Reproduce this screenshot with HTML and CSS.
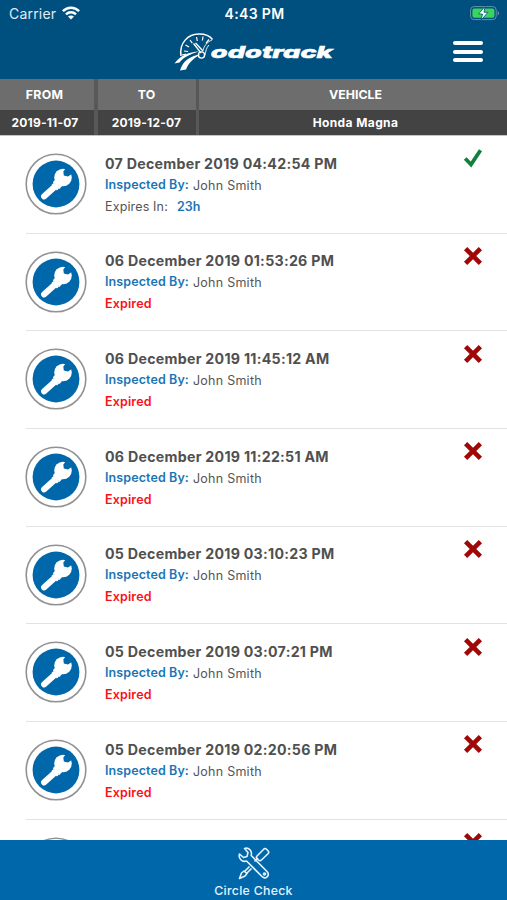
FILE: index.html
```
<!DOCTYPE html>
<html lang="en">
<head>
<meta charset="utf-8">
<title>odotrack</title>
<link rel="stylesheet" href="styles.css">
</head>
<body>
<svg class="defs" width="0" height="0">
  <symbol id="wrench" viewBox="0 0 62 62">
    <circle cx="31" cy="31" r="29.8" fill="#fff" stroke="#929292" stroke-width="1.6"/>
    <circle cx="31" cy="31" r="23.4" fill="#0067aa"/>
    <path d="M19.200 43.300 29.500 34" stroke="#fff" stroke-width="6.2" stroke-linecap="round"/>
    <path d="M27.500 31 33 36.500" stroke="#fff" stroke-width="3"/>
    <circle cx="38" cy="24.500" r="8.800" fill="#fff"/>
    <path d="M27.800 29.200 34.500 36 38 32 31 26Z" fill="#fff"/>
    <path d="M44 11.500 38.300 18.500 38.800 22.600 43 23.600 50.500 18.500Z" fill="#0067aa"/>
  </symbol>
  <symbol id="cross" viewBox="0 0 20 20"><path d="M2.600 2.600 17.400 17.400M17.400 2.600 2.600 17.400" stroke="#a00808" stroke-width="4.6"/></symbol>
  <symbol id="check" viewBox="0 0 20 20"><path d="M2.2 10.5 8 16.5 17.5 2.2" fill="none" stroke="#137f3c" stroke-width="3.8"/></symbol>
</svg>
<div class="app">
  <header>
    <div class="status">
      <div class="carrier"><span>Carrier</span>
        <svg width="18" height="14" viewBox="0 0 18 14" fill="none" stroke="#fff" stroke-width="2.5"><path d="M.9 5.1C5.5.5 12.5.5 17.1 5.1M4 8.3C6.8 5.5 11.2 5.5 14 8.3"/><path d="M9 13.6 6 10.5C7.6 9 10.4 9 12 10.5Z" fill="#fff" stroke="none"/></svg>
      </div>
      <div class="clock">4:43 PM</div>
      <svg class="battery" width="30" height="15" viewBox="0 0 30 15"><rect x=".6" y=".6" width="25.6" height="13" rx="3.5" fill="none" stroke="#6591b0"/><rect x="2.4" y="2.4" width="22" height="9.4" rx="2" fill="#38d65b"/><path d="M27.6 5v4.5c2-.8 2-3.700 0-4.500Z" fill="#6591b0"/><path d="M15 .5 8.500 8h4l-1.300 6L18 6.300h-4Z" fill="#fff" stroke="#00507f" stroke-width=".8"/></svg>
    </div>
    <div class="brand">
      <svg width="162" height="42" viewBox="0 0 162 42" fill="none" stroke="#fff">
        <g transform="translate(-1 0)">
        <path d="M9 26C7 13 16 4 27 4 33 4 38 6 40.500 9.500" stroke-width="1.500"/>
        <path d="M12 21l4 .5M13.500 15l3.500 2M18 10l2.300 3.200M24.500 7l.8 4M31 6.500l-.6 4M37 9.500l-3 3.600M10 25l4-1" stroke-width="1.200"/>
        <path d="M21.500 13.500 29 23M23.500 13 31 21" stroke-width="1.300"/>
        <circle cx="29.500" cy="25" r="3.100" stroke-width="1.400"/>
        <path d="M2.500 33.500C9 25 17 22 27 21.500 18 24 12 27 7.500 32.500ZM8 40.500C11 31 17 26.500 28 24.500 21 29 16.500 33 14 39.500Z" fill="#fff" stroke="none"/>
        <path d="M31 20.500C32 16 35 12 40 10M33 25C34 21 34 18 37 15" stroke-width=".9"/>
        </g>
        <text x="37.800" y="28.300" textLength="122" lengthAdjust="spacingAndGlyphs" fill="#fff" stroke="#fff" stroke-width=".5" class="wordmark">odotrack</text>
      </svg>
      <div class="menu"><i></i><i></i><i></i></div>
    </div>
  </header>
  <section class="filters">
    <div class="col"><b>FROM</b><strong>2019-11-07</strong></div>
    <div class="col"><b>TO</b><strong>2019-12-07</strong></div>
    <div class="col"><b>VEHICLE</b><strong class="vehicle">Honda Magna</strong></div>
  </section>
  <main>
    <article><svg class="tool"><use href="#wrench"/></svg><div class="info"><h2>07 December 2019 04:42:54 PM</h2><p class="by"><b>Inspected By:</b><span>John Smith</span></p><p class="expires"><span>Expires In:</span><b>23h</b></p></div><svg class="mark"><use href="#check"/></svg></article>
    <article><svg class="tool"><use href="#wrench"/></svg><div class="info"><h2>06 December 2019 01:53:26 PM</h2><p class="by"><b>Inspected By:</b><span>John Smith</span></p><p class="expired">Expired</p></div><svg class="mark"><use href="#cross"/></svg></article>
    <article><svg class="tool"><use href="#wrench"/></svg><div class="info"><h2>06 December 2019 11:45:12 AM</h2><p class="by"><b>Inspected By:</b><span>John Smith</span></p><p class="expired">Expired</p></div><svg class="mark"><use href="#cross"/></svg></article>
    <article><svg class="tool"><use href="#wrench"/></svg><div class="info"><h2>06 December 2019 11:22:51 AM</h2><p class="by"><b>Inspected By:</b><span>John Smith</span></p><p class="expired">Expired</p></div><svg class="mark"><use href="#cross"/></svg></article>
    <article><svg class="tool"><use href="#wrench"/></svg><div class="info"><h2>05 December 2019 03:10:23 PM</h2><p class="by"><b>Inspected By:</b><span>John Smith</span></p><p class="expired">Expired</p></div><svg class="mark"><use href="#cross"/></svg></article>
    <article><svg class="tool"><use href="#wrench"/></svg><div class="info"><h2>05 December 2019 03:07:21 PM</h2><p class="by"><b>Inspected By:</b><span>John Smith</span></p><p class="expired">Expired</p></div><svg class="mark"><use href="#cross"/></svg></article>
    <article><svg class="tool"><use href="#wrench"/></svg><div class="info"><h2>05 December 2019 02:20:56 PM</h2><p class="by"><b>Inspected By:</b><span>John Smith</span></p><p class="expired">Expired</p></div><svg class="mark"><use href="#cross"/></svg></article>
    <article><svg class="tool"><use href="#wrench"/></svg><div class="info"></div><svg class="mark"><use href="#cross"/></svg></article>
  </main>
  <footer>
    <svg width="34" height="34" viewBox="0 0 34 34" fill="none" stroke="#e4f3ff" stroke-width="1.600" stroke-linejoin="round">
      <path d="M7.500 2.500C11.500 1 15.500 4.500 14.200 9.500L30 25.500C33.500 29.500 28.500 34 25 30.500L9.500 15C5 16.500 1.200 12.500 2.500 8L6.500 11.500 10 10.500 11 6.500Z"/>
      <path d="M20 10 26.500 3.500C27.500 2.200 28.500 2.200 29.500 3.200L31 4.700C32 5.700 32 6.700 31 7.700L24.500 14C23.500 15 22.500 15 21.500 14L20 12.500C19.200 11.700 19.200 10.800 20 10ZM21 12 17.500 15.500M12.500 20.500 7 26M14.500 22.500 9 28M7 25 4.500 27 2.500 32.500 8 30 10 27.500Z"/>
      <circle cx="27.500" cy="28" r="1"/>
    </svg>
    <span>Circle Check</span>
  </footer>
</div>
</body>
</html>
```
FILE: styles.css
```
* { box-sizing: border-box; margin: 0; padding: 0; }
body { background: #fff; font-family: Inter, "Liberation Sans", sans-serif; }
.defs { display: none; }
.app { height: 900px; width: 507px; display: flex; flex-direction: column; overflow: hidden; }
header { height: 79px; background: #00507f; color: #fff; flex: none; }
.status { display: grid; grid-template-columns: 1fr auto 1fr; align-items: center; height: 26px; padding: 0 7px 0 9px; }
.carrier { display: flex; align-items: center; gap: 6px; font-size: 14px; letter-spacing: .2px; color: #e1ebf2; }
.clock { font-size: 14px; font-weight: 600; letter-spacing: .35px; }
.battery { justify-self: end; }
.brand { display: flex; justify-content: space-between; align-items: flex-start; padding: 4px 24px 0 173px; }
.wordmark { font: italic 800 16.500px Inter, sans-serif; }
.menu { display: flex; flex-direction: column; gap: 4.500px; padding-top: 11px; }
.menu i { width: 30px; height: 4px; border-radius: 2px; background: #fff; }
.filters { display: grid; grid-template-columns: 94px 98px 1fr; gap: 3.500px; height: 57px; flex: none; background: #585858; border-bottom: 1px solid #c4c4c4; color: #fff; text-align: center; }
.col { display: flex; flex-direction: column; background: #6d6d6d; }
.col:first-child b, .col:first-child strong { padding-right: 4px; }
.filters b { height: 31px; line-height: 31px; font-size: 12.300px; font-weight: 700; letter-spacing: .2px; }
.col:last-child b { padding-left: 5px; letter-spacing: 0; }
.filters strong { height: 25px; line-height: 25px; background: #434343; font-size: 12px; font-weight: 700; letter-spacing: .2px; }
.filters .vehicle { padding-left: 5px; letter-spacing: .4px; }
.col:first-child b { padding-right: 5px; letter-spacing: .3px; }
main { flex: 1; min-height: 0; overflow: hidden; padding-left: 26px; }
article { height: 97.700px; border-bottom: 1px solid #e2e2e2; display: flex; align-items: flex-start; padding-right: 24px; }
.tool { width: 62px; height: 62px; margin: 17px 18px 0 -1px; flex: none; }
.info { flex: 1; padding-top: 16.500px; white-space: nowrap; }
h2 { color: #505050; font-size: 14.200px; line-height: 21px; font-weight: 700; letter-spacing: .27px; }
p { font-size: 12.500px; line-height: 21px; height: 21px; letter-spacing: .1px; color: #555; }
p b { color: #1a75b5; font-weight: 600; }
.by { display: flex; gap: 4px; }
.by span { padding-top: 1px; letter-spacing: .25px; }
.expires { display: flex; gap: 9px; padding-top: 1px; }
.expires span { letter-spacing: .15px; }
.expired { padding-top: 1px; color: #fb1018; font-weight: 600; letter-spacing: .15px; }
.mark { width: 20px; height: 20px; margin-top: 12.300px; flex: none; }
footer { height: 60px; flex: none; background: #0067aa; color: #e4f3ff; display: flex; flex-direction: column; align-items: center; padding-top: 6px; }
footer span { font-size: 12.300px; line-height: 18px; font-weight: 500; letter-spacing: .3px; margin-top: 2px; }
```
